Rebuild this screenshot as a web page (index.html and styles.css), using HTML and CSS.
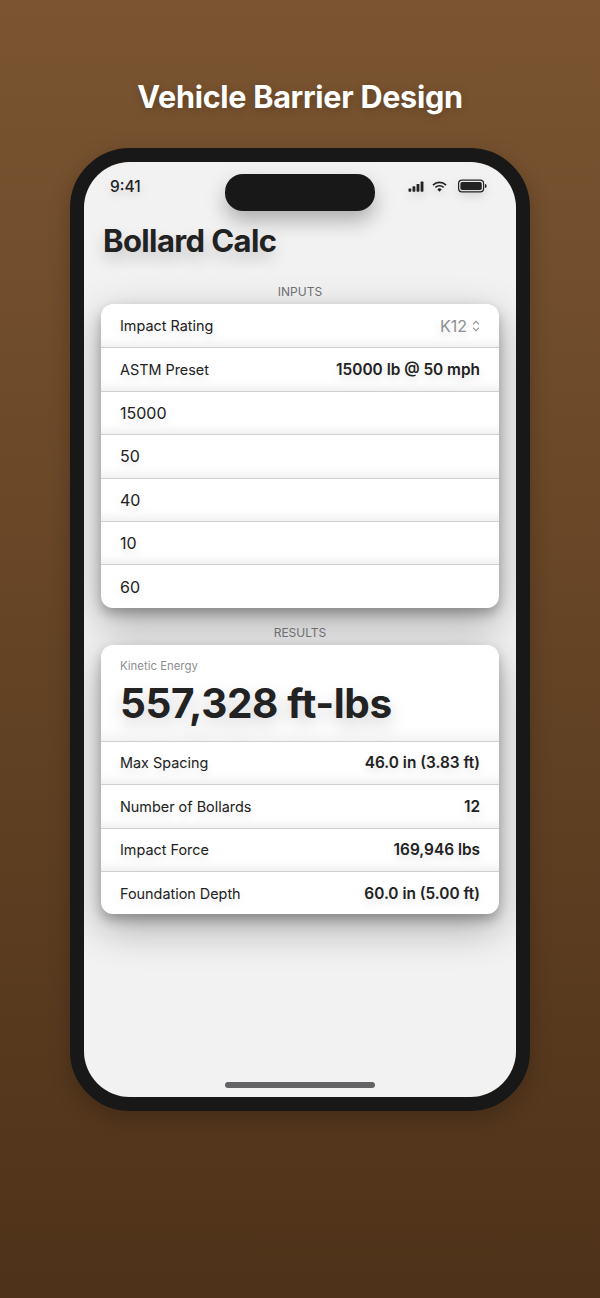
FILE: index.html
```html
<!DOCTYPE html>
<html>
<head>
    <meta charset="UTF-8">
    <meta name="viewport" content="width=device-width, initial-scale=1.0">
    <title>Vehicle Barrier Design</title>
    <link rel="stylesheet" href="styles.css">
</head>
<body>
    <h1 class="headline">Vehicle Barrier Design</h1>

    <div class="phone">
        <div class="screen">
            <div class="island"></div>

            <div class="status-bar">
                <span class="time">9:41</span>
                <div class="status-icons">
                    <svg class="icon" width="16" height="11" viewBox="0 0 17 11">
                        <rect x="0.5" y="7.5" width="3" height="3.5" rx="0.7"/>
                        <rect x="4.8" y="5.3" width="3" height="5.7" rx="0.7"/>
                        <rect x="9.1" y="2.8" width="3" height="8.2" rx="0.7"/>
                        <rect x="13.4" y="0.3" width="3" height="10.7" rx="0.7"/>
                    </svg>
                    <svg class="icon wifi" width="15" height="11" viewBox="0 0 16 11">
                        <path d="M1 4 A10 10 0 0 1 15 4" fill="none" stroke="#222" stroke-width="1.7"/>
                        <path d="M3.6 6.5 A6.4 6.4 0 0 1 12.4 6.5" fill="none" stroke="#222" stroke-width="1.7"/>
                        <path d="M8 11 L5.7 8.6 A3.2 3.2 0 0 1 10.3 8.6 Z"/>
                    </svg>
                    <svg class="icon" width="29" height="14" viewBox="0 0 29 13">
                        <rect x="0.6" y="0.6" width="25" height="11.8" rx="3.4" fill="none" stroke="#222" stroke-width="1.2"/>
                        <rect x="2.4" y="2.4" width="21.4" height="8.2" rx="1.8"/>
                        <path d="M27 4.4 C28.2 4.8 28.6 5.6 28.6 6.5 C28.6 7.4 28.2 8.2 27 8.6 Z"/>
                    </svg>
                </div>
            </div>

            <h2 class="app-title">Bollard Calc</h2>

            <div class="section-label">INPUTS</div>
            <div class="card">
                <div class="row">
                    <span>Impact Rating</span>
                    <span class="picker">K12
                        <svg width="8" height="12" viewBox="0 0 8 12" fill="none" stroke="#8e8e93" stroke-width="1.1">
                            <path d="M1 4.4 L4 1.4 L7 4.4"/>
                            <path d="M1 7.6 L4 10.6 L7 7.6"/>
                        </svg>
                    </span>
                </div>
                <div class="row">
                    <span>ASTM Preset</span>
                    <span class="value">15000 lb @ 50 mph</span>
                </div>
                <div class="row field">15000</div>
                <div class="row field">50</div>
                <div class="row field">40</div>
                <div class="row field">10</div>
                <div class="row field">60</div>
            </div>

            <div class="section-label results-label">RESULTS</div>
            <div class="card">
                <div class="hero">
                    <div class="hero-label">Kinetic Energy</div>
                    <div class="hero-value">557,328 ft-lbs</div>
                </div>
                <div class="row">
                    <span>Max Spacing</span>
                    <span class="value">46.0 in (3.83 ft)</span>
                </div>
                <div class="row">
                    <span>Number of Bollards</span>
                    <span class="value">12</span>
                </div>
                <div class="row">
                    <span>Impact Force</span>
                    <span class="value">169,946 lbs</span>
                </div>
                <div class="row">
                    <span>Foundation Depth</span>
                    <span class="value">60.0 in (5.00 ft)</span>
                </div>
            </div>

            <div class="home-bar"></div>
        </div>
    </div>
</body>
</html>
```

FILE: styles.css
```css
html, body {
    margin: 0;
    height: 100%;
}

body {
    font-family: Inter, "Liberation Sans", sans-serif;
    background: linear-gradient(180deg, #7b5531 0%, #4e3219 100%);
    color: #222;
    overflow: hidden;
}

.headline {
    margin: 0;
    padding-top: 78px;
    height: 70px;
    line-height: 38px;
    font-size: 30.6px;
    font-weight: 700;
    letter-spacing: -0.3px;
    text-align: center;
    color: #fff;
    text-shadow: 0 2px 8px rgba(0, 0, 0, 0.22);
}

.phone {
    width: 432px;
    height: 935px;
    margin: 0 auto;
    border: 14px solid #181818;
    border-radius: 60px;
    box-shadow: 0 6px 22px rgba(0, 0, 0, 0.22);
}

.screen {
    position: relative;
    height: 100%;
    border-radius: 46px;
    background: #f2f2f2;
    overflow: hidden;
}

.island {
    position: absolute;
    top: 12px;
    left: 141px;
    width: 150px;
    height: 37px;
    border-radius: 18px;
    background: #181818;
    box-shadow: 0 10px 20px rgba(0, 0, 0, 0.28);
}

.status-bar {
    display: flex;
    justify-content: space-between;
    align-items: center;
    height: 48px;
    padding: 0 29px 0 26px;
}

.time {
    font-size: 15.5px;
    font-weight: 500;
    text-shadow: 0 4px 10px rgba(0, 0, 0, 0.16);
}

.status-icons {
    display: flex;
    align-items: center;
    gap: 8px;
    filter: drop-shadow(0 4px 5px rgba(0, 0, 0, 0.14));
}

.wifi {
    margin-right: 3px;
}

.icon {
    display: block;
    fill: #222;
}

.app-title {
    margin: 0;
    padding: 13px 0 0 19px;
    height: 43px;
    line-height: 36px;
    font-size: 31px;
    font-weight: 700;
    letter-spacing: -0.6px;
    text-shadow: 0 8px 16px rgba(0, 0, 0, 0.2);
}

.section-label {
    margin-top: 12px;
    height: 26px;
    line-height: 28px;
    font-size: 12px;
    text-align: center;
    color: #6d6d72;
}

.results-label {
    margin-top: 11px;
}

.card {
    width: 398px;
    margin: 0 auto;
    border-radius: 12px;
    background: #fff;
    box-shadow: 0 14px 40px rgba(0, 0, 0, 0.3), 0 6px 12px rgba(0, 0, 0, 0.26);
}

.row {
    display: flex;
    justify-content: space-between;
    align-items: center;
    box-sizing: border-box;
    height: 43.4px;
    padding: 0 19px;
    font-size: 14.4px;
    border-top: 1px solid #cfcfcf;
    box-shadow: inset 0 -12px 12px -10px rgba(0, 0, 0, 0.09);
    text-shadow: 0 4px 9px rgba(0, 0, 0, 0.13);
}

.row:first-child {
    border-top: none;
    border-radius: 12px 12px 0 0;
}

.row:last-child {
    box-shadow: none;
    border-radius: 0 0 12px 12px;
}

.field {
    font-size: 16px;
}

.value {
    font-size: 15.4px;
    font-weight: 600;
}

.picker {
    display: flex;
    align-items: center;
    gap: 5px;
    font-size: 16px;
    color: #8e8e93;
}

.hero {
    box-sizing: border-box;
    height: 96px;
    padding: 14px 19px 0;
    box-shadow: inset 0 -14px 14px -10px rgba(0, 0, 0, 0.07);
}

.hero-label {
    font-size: 11.4px;
    line-height: 15px;
    color: #8e8e93;
}

.hero-value {
    margin-top: 5px;
    font-size: 40.5px;
    line-height: 50px;
    font-weight: 700;
    letter-spacing: -0.4px;
    text-shadow: 0 8px 18px rgba(0, 0, 0, 0.2);
}

.home-bar {
    position: absolute;
    left: 141px;
    bottom: 9px;
    width: 150px;
    height: 6px;
    border-radius: 3px;
    background: #636366;
}
```
